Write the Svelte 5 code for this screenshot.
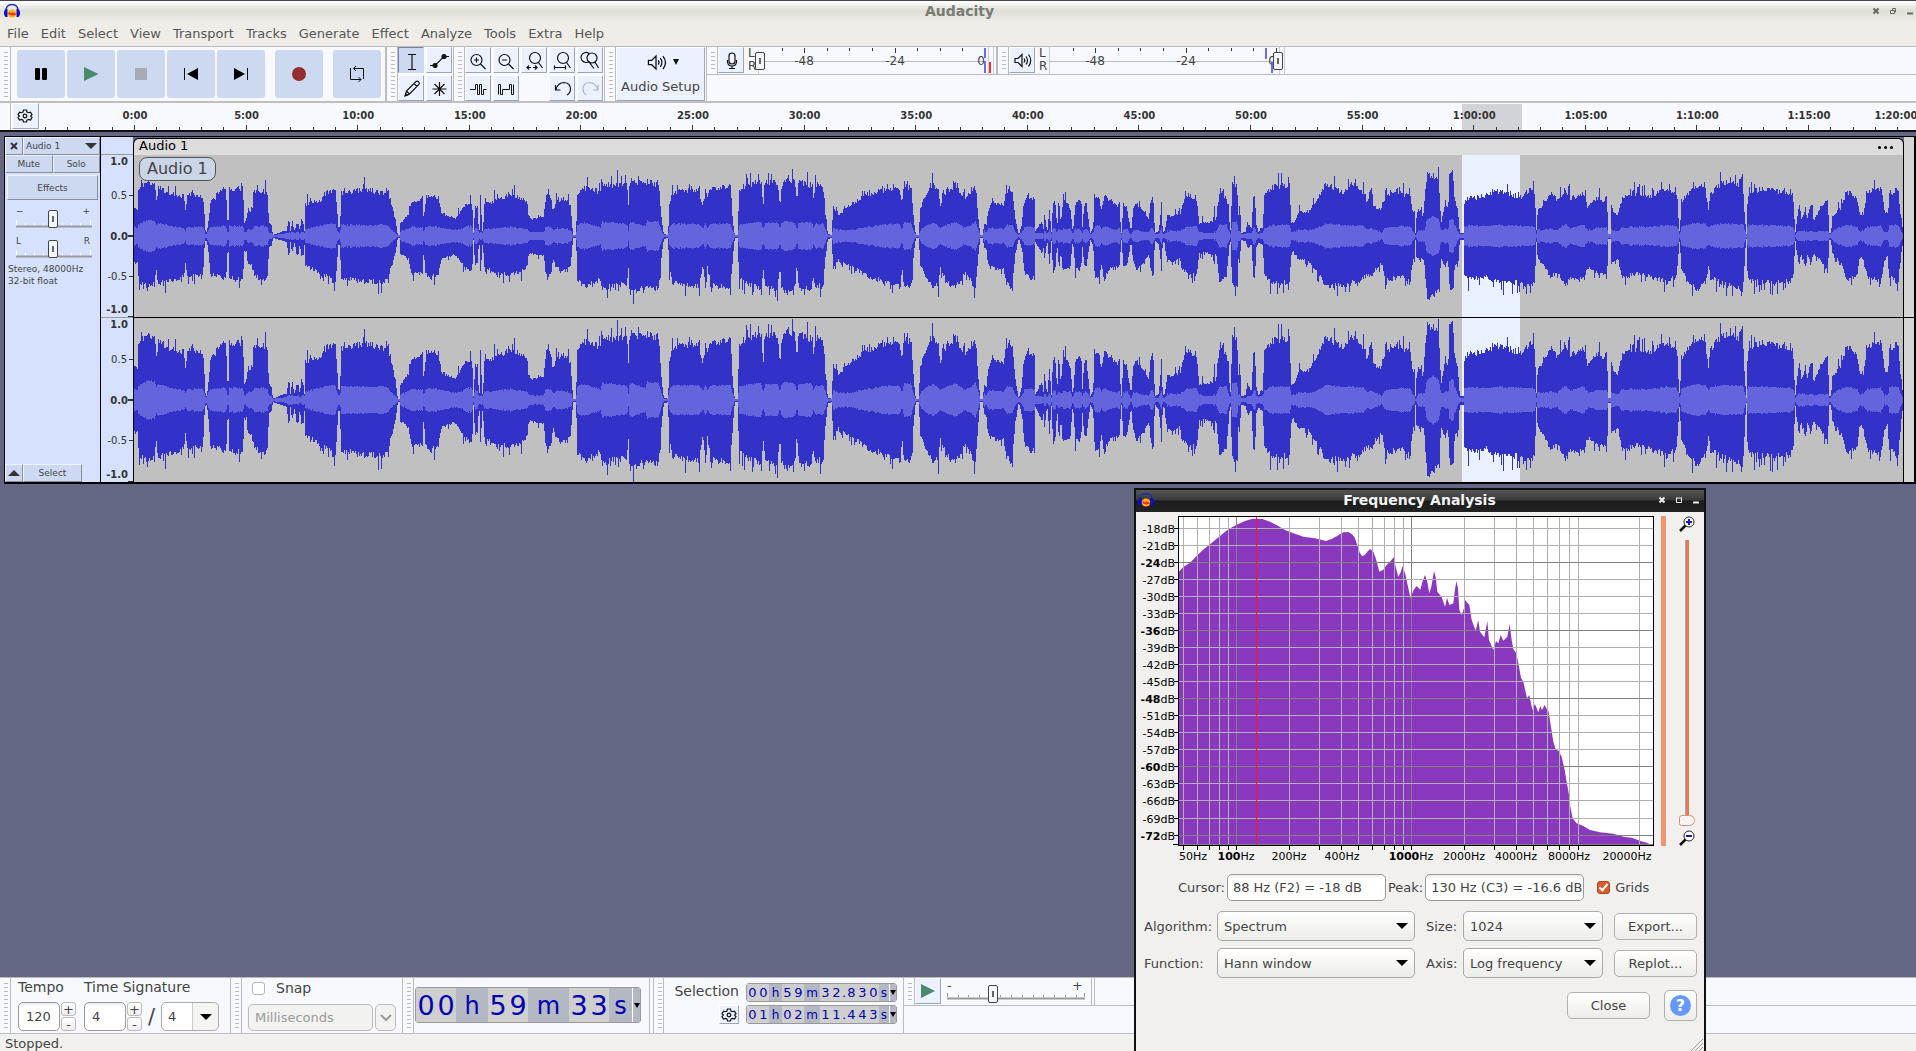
<script>
	const menus = ['File', 'Edit', 'Select', 'View', 'Transport', 'Tracks', 'Generate', 'Effect', 'Analyze', 'Tools', 'Extra', 'Help'];

	// stroked icons on a 26px grid
	const icons = {
		ibeam: 'M10 7.500h8M14 7.500v15M10 22.500h8',
		pencil: 'M7 21l1.500-5L18 6.500q1.500-1 2.700.300 1.200 1.300.200 2.600L11.500 19zM8.500 16l3 3M16 8.500l3 3M7 21l2.500-.800-1.700-1.700z',
		star: 'M13.500 7v14M6.500 14h14M8.500 9l10 10M18.500 9l-10 10',
		zoomIn: 'M17 13a5.500 5.500 0 1 1-11 0 5.500 5.500 0 0 1 11 0M15.500 17l5 5M9 13h5M11.500 10.500v5',
		zoomOut: 'M17 13a5.500 5.500 0 1 1-11 0 5.500 5.500 0 0 1 11 0M15.500 17l5 5M9 13h5',
		zoomSel: 'M19.500 11a5.500 5.500 0 1 1-11 0 5.500 5.500 0 0 1 11 0M17.500 15.500l4 5.500M6.500 20.500h3.500M12 20.500h3.500M8 18.500l-2 2 2 2M14 18.500l2 2-2 2',
		zoomFit: 'M19.500 11a5.500 5.500 0 1 1-11 0 5.500 5.500 0 0 1 11 0M17.500 15.500l4 5.500M5.500 18.500v4M16.500 18.500v4M5.500 20.500h11',
		zoomToggle: 'M9 15.500a5 5 0 1 1 3-9M20 11a5 5 0 1 1-10 0 5 5 0 0 1 10 0M18 15l3.500 6M9 15.500l3-.500 5 6.500',
		trim: 'M5 14.500h5.500v-5h2v10h2v-10h2v10h2v-5h3',
		silence: 'M5.500 19.500v-10h2v10h2v-5h7v-5h2v10h2v-10',
		undo: 'M7 14.500q2-7 8-7 6.500.500 6.500 6.500 0 4-3.500 6M6.500 10v5h5',
		redo: 'M20.500 14.500q-2-7-8-7-6.500.500-6.500 6.500 0 4 3.500 6M21 10v5h-5',
		mic: 'M11 9q0-3 3-3t3 3v5q0 3-3 3t-3-3zM9.500 13v2q.500 4 4.500 4t4.500-4v-2M14 19v2.500M11 21.500h6',
		speaker: 'M6 11.500h3l4-4v12l-4-4H6zM15 11.500q1.500 2 0 4M17 9.500q3 4 0 8M19.500 7.500q4.500 6 0 12',
		gear: 'M11.500 7h3l.500 2 1.500.700 2-.600 1.500 2.600-1.400 1.300 1.400 1.500-1.500 2.600-2-.600-1.500.700-.500 1.800h-3l-.500-1.800-1.500-.700-2 .600L6 14.500 7.400 13 6 11.700l1.500-2.600 2 .600 1.500-.700zM14.800 13a1.800 1.800 0 1 1-3.600 0 1.800 1.800 0 0 1 3.600 0'
	};

	const ticks = Array.from({ length: 85 }, (_, i) => i - 4);
	const hours = Array.from({ length: 17 }, (_, i) => {
		const m = i * 5;
		const rest = m % 60;
		return m < 60 ? `${m}:00` : `1:${String(rest).padStart(2, '0')}:00`;
	});
	const meterTicks = [24, 46, 69, 91, 114, 137, 159, 182, 204, 227];

	// envelope sections: first pixel, then rows of x (thirds of a pixel), peak, trough, rms
	const sections = [
		[-134, [[400,28,27,9],[412,28,27,9],[415,50,47,12],[445,54,50,16],[463,54,49,15],[467,34,31,11],[475,51,49,13],[500,44,45,11],[550,41,41,8],[555,26,27,6],[562,44,41,9],[608,41,38,9],[612,20,12,6],[616,1,1,1],[622,9,9,5],[630,34,37,9],[670,49,42,10],[677,46,42,10],[680,16,16,4],[684,16,16,4],[686,48,41,10],[727,49,44,10],[732,14,14,4],[738,14,14,4],[742,28,27,7],[755,25,30,6],[762,46,41,10],[800,46,44,10],[806,13,10,3],[814,11,9,3],[817,1,1,1],[850,5,4,2],[860,5,5,3],[862,16,19,3],[867,14,17,4],[870,5,5,3],[875,14,17,4],[883,5,5,3],[888,13,18,4],[894,13,18,4],[898,5,6,2],[903,17,20,4],[909,13,17,4],[912,5,8,3],[915,33,29,7],[960,36,37,10],[985,47,42,12],[1005,46,47,12],[1010,30,25,7],[1013,10,9,4],[1019,9,8,3],[1022,44,42,11],[1090,48,46,11],[1160,44,46,11]]],
		[256, [[0,38,33,7],[15,17,17,3],[22,1,1,1],[27,1,1,1],[30,13,17,5],[55,23,23,7],[62,33,37,9],[97,40,37,9],[100,13,10,2],[104,32,35,9],[115,42,42,10],[145,40,37,9],[153,23,23,8],[195,18,17,6],[215,28,28,7],[230,33,33,10],[245,35,35,10],[249,3,3,2],[254,30,28,8],[261,30,28,8],[265,6,8,3],[269,6,8,3],[270,40,36,4],[272,40,36,4],[274,5,8,3],[278,5,8,3],[281,33,32,7],[330,38,38,8],[360,43,38,9],[385,40,37,8],[410,35,30,7],[415,17,17,4],[460,20,20,4],[466,40,37,9],[482,40,38,9],[487,23,23,5],[498,37,32,8],[530,38,35,7],[541,30,28,6],[546,8,8,2],[548,1,1,1],[557,1,1,1],[560,42,43,11],[580,50,50,13],[630,45,43,9],[635,53,52,14],[710,52,47,12],[714,32,33,5],[718,57,57,14],[765,53,52,10],[770,57,53,15],[805,52,52,14],[815,13,16,4],[820,2,2,1],[833,1,1,1],[836,30,32,8],[845,45,47,12],[925,48,50,12],[937,30,30,8],[945,47,45,12],[952,37,28,8],[960,48,50,12],[1020,52,52,12],[1028,12,16,5],[1033,1,1,1],[1043,1,1,1],[1045,45,43,11],[1075,53,50,13],[1112,57,52,14],[1119,32,33,7],[1124,55,52,13],[1162,55,52,13],[1168,30,32,7],[1175,53,52,14],[1190,60,58,15],[1214,57,52,13],[1219,33,30,7],[1225,57,53,13],[1262,52,53,14],[1270,40,43,8],[1276,53,50,12],[1298,50,52,12],[1305,23,22,7],[1312,2,2,1],[1325,1,1,1],[1327,32,33,8],[1345,22,23,6],[1380,32,30,6],[1430,43,40,9],[1500,48,48,12],[1528,47,50,12]]],
		[766, [[0,45,40,9],[5,33,27,6],[10,52,53,14],[32,50,50,13],[40,17,17,4],[46,1,1,1],[56,1,1,1],[58,27,27,5],[78,45,43,11],[100,53,52,13],[115,47,47,10],[118,32,32,8],[140,47,47,11],[165,52,52,14],[195,38,38,8],[225,50,52,14],[235,13,13,5],[240,1,1,1],[248,1,1,1],[250,12,10,5],[259,12,14,5],[262,25,27,7],[275,35,32,8],[310,32,33,7],[318,47,47,11],[335,47,53,11],[345,17,17,4],[355,1,1,1],[365,13,13,4],[373,37,40,9],[403,40,43,9],[405,5,5,3],[425,15,17,3],[430,5,9,2],[431,23,23,5],[434,20,20,5],[440,3,3,2],[447,27,27,6],[453,4,4,2],[458,37,37,8],[466,32,30,7],[470,5,5,3],[475,40,33,8],[481,13,13,5],[488,40,35,7],[510,28,30,7],[517,3,3,2],[525,32,33,7],[542,37,33,7],[546,10,10,3],[550,27,25,6],[557,37,33,8],[563,17,17,5],[570,3,3,2],[578,8,8,3],[583,42,40,9],[597,37,40,11],[603,25,30,7],[612,43,45,10],[622,38,33,8],[650,30,32,6],[658,37,30,8],[661,3,3,2],[665,3,3,2],[667,33,30,6],[680,27,28,7],[690,8,8,2],[694,8,8,2],[697,27,23,6],[710,33,35,6],[735,23,23,4],[745,17,17,4],[752,40,37,8],[760,35,33,7],[763,3,3,2],[775,5,7,2],[783,30,32,7],[787,4,4,2],[793,5,6,2],[800,20,25,5],[840,23,23,5],[848,33,35,7],[860,43,37,9],[888,37,40,10],[897,13,17,4],[903,13,17,4],[904,36,35,5],[907,13,15,3],[938,15,18,3],[942,30,25,5],[946,13,12,3],[950,28,27,7],[958,43,47,11],[978,40,42,11],[985,27,15,5],[989,3,3,2],[992,13,10,3],[994,52,50,14],[1010,52,50,14],[1013,20,20,4],[1018,32,27,5],[1022,3,3,2],[1035,4,4,2],[1040,13,10,3],[1054,8,8,3],[1058,42,43,8],[1064,40,40,8],[1067,12,10,4],[1075,3,5,2],[1080,8,7,3],[1087,8,8,3],[1091,40,37,8],[1110,50,47,11],[1168,52,47,11],[1172,13,15,4],[1180,13,15,4],[1195,25,23,6],[1225,25,25,6],[1250,37,35,8],[1275,53,50,12],[1290,50,50,12],[1330,45,50,11],[1355,53,47,11],[1390,45,42,10],[1400,35,38,7],[1413,50,42,8],[1420,30,35,6],[1445,27,27,4],[1455,43,45,8],[1500,45,40,10],[1530,40,45,9],[1537,25,25,5],[1543,25,20,3],[1545,3,3,1],[1548,20,20,2],[1554,27,23,5]]],
		[1286, [[0,26,26,6],[8,19,17,5],[13,39,34,7],[20,63,61,17],[38,63,62,20],[55,58,54,17],[62,14,21,5],[75,36,31,7],[83,22,22,6],[87,63,51,15],[98,66,57,18],[103,36,26,10],[112,29,31,5],[118,3,3,2],[130,3,3,2],[132,34,37,10],[140,39,44,10],[200,41,41,10],[230,46,46,11],[300,39,47,10],[335,49,51,10],[344,43,47,9],[347,1,1,1],[352,26,21,6],[365,31,27,6],[392,46,41,7],[410,36,36,6],[435,49,51,12],[450,39,41,8],[490,43,44,11],[502,29,31,6],[530,39,37,8],[560,33,37,8],[564,2,2,2],[570,2,2,2],[572,29,27,7],[592,21,22,4],[605,39,41,9],[650,44,37,9],[690,41,41,9],[740,49,46,11],[768,41,41,10],[774,19,17,6],[778,1,1,1],[782,33,31,9],[800,43,44,11],[830,53,54,13],[855,49,47,12],[864,26,31,8],[870,43,41,11],[900,54,47,12],[930,56,51,12],[968,51,54,12],[973,18,18,5],[978,2,2,2],[982,43,44,11],[1020,49,47,11],[1110,44,46,10],[1120,33,38,9],[1124,1,1,1],[1128,13,12,3],[1136,33,31,6],[1142,13,16,5],[1155,30,30,5],[1160,18,18,4],[1172,33,25,5],[1180,15,18,4],[1200,29,24,5],[1222,39,36,5],[1226,3,3,2],[1232,3,3,2],[1235,19,17,5],[1260,29,26,9],[1280,46,44,11],[1310,39,41,9],[1318,22,21,5],[1328,21,21,5],[1340,46,41,9],[1380,48,46,10],[1392,26,24,4],[1403,22,20,4],[1406,43,41,11],[1433,48,47,11],[1440,22,22,6],[1449,2,2,1]]]
	];
	const envelope = sections.flatMap(([start, rows]) => rows.map(([x, ...rest]) => [start + x / 3, ...rest]));
	const CLIP_WIDTH = 1769;

	function noise(n) {
		const v = Math.sin(n * 127.1 + 11.7) * 43758.5453;
		return v - Math.floor(v);
	}

	// mostly low values with a tall one now and then
	function spike(n) {
		return 0.91 + noise(n) * 0.12 + (noise(n + 5000) > 0.82 ? noise(n + 8000) * 0.26 : 0);
	}

	function wave(mid, gain) {
		let peaks = '';
		let rms = '';
		let k = 0;
		for (let x = 0; x < CLIP_WIDTH; x++) {
			while (k < envelope.length - 2 && envelope[k + 1][0] < x) k++;
			const a = envelope[k];
			const b = envelope[k + 1];
			const t = Math.min(1, Math.max(0, (x - a[0]) / (b[0] - a[0] || 1)));
			const at = (i) => (a[i] + (b[i] - a[i]) * t) * gain;
			let up = at(1);
			let down = at(2);
			if (up > 9) {
				up *= spike(x);
				down *= spike(x + 900);
			}
			up = Math.round(Math.min(mid - 1, up));
			down = Math.round(Math.min(mid - 1, down));
			const r = Math.round(Math.min(up, at(3) + (at(3) > 4 ? noise(x + 300) * 1.6 - 0.8 : 0)));
			peaks += `M${x} ${mid - up}h1v${up + down + 1}h-1z`;
			rms += `M${x} ${mid - r}h1v${r * 2}h-1z`;
		}
		return { peaks, rms };
	}

	const channels = [
		{ height: 162, mid: 81, ...wave(81, 1) },
		{ height: 164, mid: 82, ...wave(82, 1.21) }
	];

	// spectrum plot
	const dbs = Array.from({ length: 19 }, (_, i) => -18 - i * 3);
	const dbY = (db) => Math.floor(16 + ((-18 - db) / 3) * 17.06) + 0.5;
	const hzX = (hz) => Math.round(275 + Math.log10(hz / 1000) * 175) + 0.5;
	const freqs = [50, 60, 70, 80, 90, 100, 200, 300, 400, 500, 600, 700, 800, 900, 1000, 2000, 3000, 4000, 5000, 6000, 7000, 8000, 9000, 20000];
	const freqLabels = [[50, 57], [100, 100], [200, 153], [400, 206], [1000, 275], [2000, 328], [4000, 380], [8000, 433], [20000, 491]];
	const spectrum =
		'145,262 160,246 180,233 205,208 222,192 240,178 270,153 295,133 320,119 345,108 368,101 397,102 420,110 445,123 465,135 490,145 520,155 555,160 588,168 605,162 625,151 640,142 655,141 665,147 673,155 680,175 690,205 697,214 705,209 712,200 720,192 730,200 738,222 748,260 760,254 770,240 780,230 791,217 797,245 805,275 812,262 818,243 826,268 835,310 842,340 850,316 860,303 871,314 878,288 885,270 892,290 898,325 904,305 912,258 917,275 922,320 935,336 945,365 951,338 958,360 970,355 974,320 979,288 984,310 988,375 995,390 1002,370 1005,345 1018,360 1025,405 1037,437 1045,405 1050,440 1063,457 1072,408 1077,465 1090,495 1098,468 1105,475 1112,450 1120,467 1132,455 1139,417 1145,465 1150,492 1159,505 1167,545 1173,578 1180,590 1191,640 1198,630 1207,675 1215,657 1225,682 1231,663 1236,675 1244,660 1250,672 1256,680 1262,720 1270,770 1277,793 1286,798 1295,815 1303,850 1310,890 1317,930 1321,965 1328,1000 1340,1015 1360,1023 1380,1035 1410,1042 1450,1046 1480,1055 1505,1058 1530,1067 1550,1073 1560,1078 1560,1081 145,1081';

	const bigTime = [...'00', 'h', ...'59', 'm', ...'33', 's'];
	const selTimes = [
		['Selection start', [...'00', 'h', ...'59', 'm', ...'32.830', 's']],
		['Selection end', [...'01', 'h', ...'02', 'm', ...'11.443', 's']]
	];

	let gain = 50;
	let pan = 50;
	let recVolume = 0;
	let playVolume = 100;
	let speed = 32;
	let zoom = 0;
	let snap = false;
	let grids = true;
</script>

{#snippet icon(name)}
	<svg class="icon" viewBox="0 0 26 26"><path d={icons[name]} /></svg>
{/snippet}

{#snippet logo()}
	<svg class="logo" viewBox="0 0 18 16">
		<path d="M3 9Q2.500 1.500 9 1.500T15 9" fill="none" stroke="#2030b0" stroke-width="1.500" />
		<ellipse cx="9" cy="10.500" rx="4.500" ry="4" fill="#ffb31a" />
		<path d="M5 11l1.500-2 1.500 1.500L9.500 9l1.500 1.500 1-1 1 2.500-4 .5z" fill="#f22c12" />
		<path d="M3.500 6Q1 6.500 1 10t2 4h1.500V6zM14.500 6Q17 6.500 17 10t-2 4h-1.500V6z" fill="#0a0ad2" />
	</svg>
{/snippet}

{#snippet time(chars)}
	{#each chars as c}<span class="cell" class:unit={/[hms]/.test(c)} class:m={c === 'm'} class:s={c === 's'} class:dot={c === '.'}>{c}</span>{/each}<span class="drop"></span>
{/snippet}

{#snippet meterScale()}
	<path d="M0 14.500h226" stroke="#bbb" />
	{#each meterTicks as x, i}
		<path d="M{x + 0.5} 1v{i % 4 === 1 ? 5 : 3}" stroke="#333" />
	{/each}
	<text x="46" y="18">-48</text>
	<text x="137" y="18">-24</text>
	<text x="223" y="18">0</text>
{/snippet}

<div class="window">
	<header class="titlebar">
		{@render logo()}
		<h1>Audacity</h1>
		<div class="winbuttons">
			<svg viewBox="0 0 8 8"><path d="M1.500 1.500l5 5M6.500 1.500l-5 5" stroke-width="2" /></svg>
			<svg viewBox="0 0 8 8"><path d="M1.500 3.500h4v3h-4zM3.500 3V1.500h3v3.500H6" /></svg>
			<svg viewBox="0 0 8 8"><path d="M1 6.500h6" stroke-width="2" /></svg>
		</div>
	</header>

	<nav class="menubar">
		{#each menus as menu}
			<a href="#{menu.toLowerCase()}">{menu}</a>
		{/each}
	</nav>

	<div class="dock">
		<div class="grip"></div>
		<div class="transport">
			<button aria-label="Pause"><svg viewBox="0 0 48 48"><rect x="18" y="18" width="5" height="12" rx="1" /><rect x="25" y="18" width="5" height="12" rx="1" /></svg></button>
			<button aria-label="Play"><svg viewBox="0 0 48 48"><path d="M17 17l14.500 7L17 31z" fill="#4a8a6c" /></svg></button>
			<button aria-label="Stop"><svg viewBox="0 0 48 48"><path d="M18 18h12v12H18z" fill="#a6aab3" /></svg></button>
			<button aria-label="Skip to start"><svg viewBox="0 0 48 48"><path d="M17 18h1v12h-1zM31 18v12l-11-6z" /></svg></button>
			<button aria-label="Skip to end"><svg viewBox="0 0 48 48"><path d="M30 18h1v12h-1zM17 18v12l11-6z" /></svg></button>
			<button class="apart" aria-label="Record"><svg viewBox="0 0 48 48"><circle cx="24" cy="24" r="7" fill="#962d2e" /></svg></button>
			<button class="apart" aria-label="Loop"><svg viewBox="0 0 48 48"><path d="M17.500 18v11.500h10.500M30.500 29V18.500H20.500M23 16l-2.500 2.500 2.500 2.500M25.500 27l2.500 2.500-2.500 2.500" fill="none" stroke="#111" /></svg></button>
		</div>
		<div class="grip"></div>
		<div class="tools two">
			<button class="tool on" aria-label="Selection tool">{@render icon('ibeam')}</button>
			<button class="tool" aria-label="Envelope tool"><svg class="icon" viewBox="0 0 26 26"><path d="M4 18.500h5l9-9h5" /><circle cx="9" cy="18.500" r="2" fill="#111" /><circle cx="18" cy="9.500" r="2" fill="#111" /></svg></button>
			<button class="tool" aria-label="Draw tool">{@render icon('pencil')}</button>
			<button class="tool" aria-label="Multi-tool">{@render icon('star')}</button>
		</div>
		<div class="grip"></div>
		<div class="tools five">
			<button class="tool" aria-label="Zoom in">{@render icon('zoomIn')}</button>
			<button class="tool" aria-label="Zoom out">{@render icon('zoomOut')}</button>
			<button class="tool" aria-label="Fit selection">{@render icon('zoomSel')}</button>
			<button class="tool" aria-label="Fit project">{@render icon('zoomFit')}</button>
			<button class="tool" aria-label="Zoom toggle">{@render icon('zoomToggle')}</button>
			<button class="tool thin" aria-label="Trim">{@render icon('trim')}</button>
			<button class="tool thin" aria-label="Silence">{@render icon('silence')}</button>
			<span></span>
			<button class="tool" aria-label="Undo">{@render icon('undo')}</button>
			<button class="tool faded" aria-label="Redo">{@render icon('redo')}</button>
		</div>
		<div class="grip"></div>
		<div class="setup">
			<button class="tool">
				<span class="setup-icons">
					<svg class="icon" viewBox="0 0 26 26"><path d={icons.speaker} /></svg>
					<i class="arrow"></i>
				</span>
				Audio Setup
			</button>
		</div>
		<div class="meters">
			<div class="grip"></div>
			<button class="tool" aria-label="Record meter">{@render icon('mic')}</button>
			<div class="lr"><span>L</span><span>R</span></div>
			<div class="meter">
				<svg width="238" height="27">
					<path d="M.5 3v24M230.500 0v27M235.500 0v27" stroke="#ccc" />
					{@render meterScale()}
					<path d="M226 1h2v10h-2zM226 14h2v12h-2z" fill="#6a6af5" />
					<path d="M231 15h2v11h-2z" fill="#ff2a2a" />
				</svg>
				<input type="range" aria-label="Recording volume" bind:value={recVolume} />
			</div>
			<div class="grip"></div>
			<button class="tool" aria-label="Playback meter">{@render icon('speaker')}</button>
			<div class="lr"><span>L</span><span>R</span></div>
			<div class="meter">
				<svg width="238" height="27">
					<path d="M.5 0v27M230.500 0v27M235.500 0v27" stroke="#ccc" />
					{@render meterScale()}
					<path d="M216 1h2v11h-2zM222 15h2v11h-2z" fill="#6a6af5" />
				</svg>
				<input type="range" aria-label="Playback volume" bind:value={playVolume} />
			</div>
		</div>
	</div>

	<div class="timeline">
		<div class="corner"></div>
		<button class="tool" aria-label="Timeline options">{@render icon('gear')}</button>
		<svg height="27">
			<rect x="1423" y="1" width="60" height="26" fill="#d2d3d9" />
			{#each ticks as t}
				{@const x = Math.round(95 + t * 22.32) + 0.5}
				<path d="M{x} {t % 5 === 0 ? 22 : 24}V27" stroke="#333" />
			{/each}
			{#each hours as label, i}
				<text x={Math.min(96 + i * 111.6, 1857)} y="16">{label}</text>
			{/each}
		</svg>
	</div>

	<main class="tracks">
		<section class="track">
			<div class="panel">
				<div class="row name">
					<button class="flat close" aria-label="Close track"><svg viewBox="0 0 8 8"><path d="M1 1l6 6M7 1l-6 6" stroke="#333" stroke-width="2" /></svg></button>
					<button class="flat title">Audio 1<i class="arrow wide"></i></button>
				</div>
				<div class="row halves">
					<button class="flat">Mute</button>
					<button class="flat">Solo</button>
				</div>
				<button class="flat effects">Effects</button>
				<div class="slider">
					<div class="ends"><span>−</span><span>+</span></div>
					<svg viewBox="0 0 76 10"><path d="M.5 2v6M9.500 5v3M18.500 5v3M27.500 5v3M46.500 5v3M55.500 5v3M64.500 5v3M74.500 2v6" stroke="#fff" /><path d="M0 8.500h76" stroke="#999" stroke-width="2" /></svg>
					<input type="range" aria-label="Gain" bind:value={gain} />
				</div>
				<div class="slider">
					<div class="ends"><span>L</span><span>R</span></div>
					<svg viewBox="0 0 76 10"><path d="M.5 2v6M9.500 5v3M18.500 5v3M27.500 5v3M46.500 5v3M55.500 5v3M64.500 5v3M74.500 2v6" stroke="#fff" /><path d="M0 8.500h76" stroke="#999" stroke-width="2" /></svg>
					<input type="range" aria-label="Pan" bind:value={pan} />
				</div>
				<p>Stereo, 48000Hz<br />32-bit float</p>
				<div class="row foot">
					<button class="flat close" aria-label="Collapse track"><i class="arrow wide up"></i></button>
					<button class="flat">Select</button>
				</div>
			</div>

			<div class="vruler">
				{#each channels as ch}
					<svg height={ch.height} width="32">
						<g class="strong">
							<text x="27" y="10">1.0</text>
							<text x="27" y={ch.mid + 4}>0.0</text>
							<text x="27" y={ch.height - 4}>-1.0</text>
						</g>
						<text x="26" y={ch.mid - 37}>0.5</text>
						<text x="26" y={ch.mid + 44}>-0.5</text>
						<path d="M28 {ch.mid - 40.5}h4M28 {ch.mid + 40.5}h4M27 {ch.height - 0.5}h5" stroke="#333" />
						<path d="M27 {ch.mid}h5" stroke="#333" stroke-width="2" />
					</svg>
				{/each}
			</div>

			<div class="clip">
				<div class="clip-title"><span>Audio 1</span><button aria-label="Clip menu"><i></i><i></i><i></i></button></div>
				{#each channels as ch}
					<svg class="wave" height={ch.height} viewBox="0 0 {CLIP_WIDTH} {ch.height}" preserveAspectRatio="none">
						<rect x="1328" width="58" height={ch.height} fill="#e9f1ff" />
						<path d={ch.peaks} fill="#3232c8" />
						<path d={ch.rms} fill="#6464dc" />
					</svg>
				{/each}
				<div class="badge">Audio 1</div>
			</div>
			<div class="after"></div>
		</section>
	</main>

	<footer class="dock bottom">
		<div class="grip"></div>
		<div class="signature">
			<label for="tempo">Tempo</label>
			<label for="upper">Time Signature</label>
			<div class="spin">
				<input id="tempo" value="120" />
				<div><button>+</button><button>-</button></div>
			</div>
			<div class="spin">
				<input id="upper" value="4" />
				<div><button>+</button><button>-</button></div>
				<b>/</b>
				<span class="select split"><select aria-label="Lower time signature"><option>4</option></select></span>
			</div>
		</div>
		<div class="grip"></div>
		<div class="snap">
			<label><input type="checkbox" bind:checked={snap} /> Snap</label>
			<div>
				<select disabled aria-label="Snap to"><option>Milliseconds</option></select>
				<button disabled aria-label="Snap options"><svg viewBox="0 0 12 8"><path d="M1 1l5 5 5-5" /></svg></button>
			</div>
		</div>
		<div class="grip"></div>
		<div class="bigtime">
			<div class="time large">{@render time(bigTime)}</div>
		</div>
		<div class="grip"></div>
		<div class="selection">
			<span>Selection</span>
			<div class="time" aria-label={selTimes[0][0]}>{@render time(selTimes[0][1])}</div>
			<button class="tool" aria-label="Selection options">{@render icon('gear')}</button>
			<div class="time" aria-label={selTimes[1][0]}>{@render time(selTimes[1][1])}</div>
		</div>
		<div class="meters speed">
			<div class="grip"></div>
			<button class="tool" aria-label="Play at speed"><svg class="icon" viewBox="0 0 26 26"><path class="go" d="M6 6l14 7-14 7z" /></svg></button>
			<div class="slider long">
				<div class="ends"><span>-</span><span>+</span></div>
				<svg viewBox="0 0 138 10"><path d="M.5 3v4M11.500 5v2M21.500 5v2M32.500 5v2M53.500 5v2M64.500 5v2M75.500 5v2M86.500 5v2M96.500 5v2M107.500 5v2M118.500 5v2M129.500 5v2M137.500 3v4" stroke="#999" /><path d="M0 8.500h138" stroke="#999" stroke-width="2" /></svg>
				<input type="range" aria-label="Playback speed" bind:value={speed} />
			</div>
			<div class="ending"></div>
		</div>
	</footer>
	<div class="status">Stopped.</div>

	<div class="dialog" role="dialog" aria-label="Frequency Analysis">
		<div class="dialog-title">
			{@render logo()}
			<h2>Frequency Analysis</h2>
			<div class="winbuttons">
				<svg viewBox="0 0 8 8"><path d="M1.500 1.500l5 5M6.500 1.500l-5 5" stroke-width="2" /></svg>
				<svg viewBox="0 0 8 8"><path d="M1.500 2v4.500h5V2M1 2h6" /></svg>
				<svg viewBox="0 0 8 8"><path d="M1 6.500h6" stroke-width="2" /></svg>
			</div>
		</div>
		<div class="plot">
			<svg class="chart" width="520" height="354">
				<rect x="42.500" y="4.500" width="475" height="329" fill="#fff" />
				<polygon points={spectrum} transform="translate(-6 -27) scale(.33333)" fill="#8a38bd" />
				{#if grids}
					{#each freqs as hz}
						<path d="M{hzX(hz)} 5V334" stroke={hz === 100 || hz === 1000 ? '#808080' : '#b0b0b0'} />
					{/each}
					{#each dbs as db}
						<path d="M43 {dbY(db)}H518" stroke={db % 12 === 0 ? '#808080' : '#b0b0b0'} />
					{/each}
				{/if}
				<path d="M43 332.500H518" stroke="#808080" />
				<path d="M120.500 5V333" stroke="#ff1a1a" />
				<rect x="42.500" y="4.500" width="475" height="329" fill="none" stroke="#000" />
				<path d="M37 332.500h5" stroke="#000" />
				{#each dbs as db}
					<path d="M38 {dbY(db)}h4" stroke="#000" />
					<text x="39" y={dbY(db) + 4} text-anchor="end"><tspan class:strong={db % 12 === 0}>{db}</tspan>dB</text>
				{/each}
				{#each freqs as hz}
					<path d="M{hzX(hz)} 334v4" stroke="#000" />
				{/each}
				{#each freqLabels as [hz, x]}
					<text {x} y="348" text-anchor="middle"><tspan class:strong={hz === 100 || hz === 1000}>{hz}</tspan>Hz</text>
				{/each}
			</svg>
			<div class="strip"></div>
			<div class="vzoom">
				<svg viewBox="0 0 16 16"><path d="M1 15l6-6" stroke="#111" stroke-width="2.500" /><circle cx="10" cy="6" r="5" fill="#fff" stroke="#222" /><path d="M10 3v6M7 6h6" stroke="#1616b4" stroke-width="2" /></svg>
				<input type="range" aria-label="Vertical zoom" bind:value={zoom} />
				<svg viewBox="0 0 16 16"><path d="M1 15l6-6" stroke="#111" stroke-width="2.500" /><circle cx="10" cy="6" r="5" fill="#fff" stroke="#222" /><path d="M7 6h6" stroke="#1616b4" stroke-width="2" /></svg>
			</div>
		</div>
		<div class="readout">
			<label for="cursor">Cursor:</label>
			<input id="cursor" readonly value="88 Hz (F2) = -18 dB" />
			<label for="peak">Peak:</label>
			<input id="peak" readonly value="130 Hz (C3) = -16.6 dB" />
			<label class="grids"><input type="checkbox" bind:checked={grids} /> Grids</label>
		</div>
		<div class="options">
			<label for="algorithm">Algorithm:</label>
			<span class="select"><select id="algorithm"><option>Spectrum</option></select></span>
			<label for="size">Size:</label>
			<span class="select"><select id="size"><option>1024</option></select></span>
			<button class="push">Export...</button>
			<label for="function">Function:</label>
			<span class="select"><select id="function"><option>Hann window</option></select></span>
			<label for="axis">Axis:</label>
			<span class="select"><select id="axis"><option>Log frequency</option></select></span>
			<button class="push">Replot...</button>
		</div>
		<div class="actions">
			<button class="push">Close</button>
			<button class="push help" aria-label="Help"><span>?</span></button>
		</div>
		<svg class="resize" viewBox="0 0 12 12"><path d="M0 12L12 0M4 12l8-8M8 12l4-4" stroke="#999" /></svg>
	</div>
</div>

<style>
	:global(body) {
		margin: 0;
		overflow: hidden;
	}
	.window {
		position: relative;
		display: flex;
		flex-direction: column;
		height: 100vh;
		overflow: hidden;
		background: #646784;
		color: #444;
		font: 13px 'DejaVu Sans', sans-serif;
	}
	* {
		box-sizing: border-box;
	}
	button,
	input,
	select {
		margin: 0;
		padding: 0;
		border: 0;
		color: inherit;
		font: inherit;
	}
	svg {
		display: block;
		flex: none;
	}

	/* title and menu */
	.titlebar {
		display: flex;
		align-items: center;
		height: 23px;
		padding: 0 2px 2px 3px;
		border-top: 1px solid #444;
		background: linear-gradient(#fff, #dedfd6 45%, #e6e6de 70%, #f0ede8);
	}
	.logo {
		width: 18px;
		height: 16px;
	}
	h1,
	h2 {
		flex: 1;
		margin: 0;
		text-align: center;
		font-size: 14px;
		line-height: 18px;
		color: #7b7b76;
	}
	.titlebar h1 {
		padding-left: 26px;
	}
	.winbuttons {
		display: flex;
		gap: 9px;
	}
	.winbuttons svg {
		width: 8px;
		height: 8px;
		fill: none;
		stroke: #666;
	}
	.menubar {
		display: flex;
		gap: 12px;
		height: 23px;
		padding-left: 7px;
		background: #f0ede8;
		line-height: 22px;
	}
	.menubar a {
		color: #555;
		text-decoration: none;
	}

	/* toolbars */
	.dock {
		display: flex;
		height: 57px;
		border-top: 1px solid #bbb;
		border-bottom: 2px solid #bfbfbf;
		background: #f8f9fe;
	}
	.grip {
		flex: none;
		width: 11px;
		border-right: 1px solid #bbb;
		background: repeating-linear-gradient(#bbb 0 1px, #f8f9fe 1px 4px) 4px 5px / 4px calc(100% - 8px) no-repeat;
	}
	.transport {
		display: flex;
		align-items: center;
		gap: 2px;
		padding: 0 4px 0 6px;
		border-right: 2px solid #bbb;
	}
	.transport button {
		width: 48px;
		height: 48px;
		border-radius: 3px;
		background: #cdd9f1;
	}
	.transport .apart {
		margin-left: 8px;
	}
	.tools {
		display: grid;
		gap: 2px;
		padding-right: 1px;
		border-right: 1px solid #bbb;
	}
	.two {
		grid-template-columns: repeat(2, 26px);
	}
	.five {
		grid-template-columns: repeat(5, 26px);
	}
	.tool {
		display: block;
		flex: none;
		width: 26px;
		height: 26px;
		border: 1px solid #fff;
		border-right-color: #9da5b8;
		border-bottom-color: #9da5b8;
		background: #ebf1ff;
	}
	.tool.on {
		background: #cdd9f1;
		border-color: #7d859b #cdd9f1 #cdd9f1 #7d859b;
	}
	.icon {
		width: 26px;
		height: 26px;
		margin: -1px;
		fill: none;
		stroke: #111;
		stroke-width: 1.2;
	}
	.thin .icon {
		stroke-width: 1;
	}
	.faded .icon {
		stroke: #b0b5c0;
	}
	.go {
		fill: #4a8a6c;
		stroke: none;
	}
	.setup {
		padding-right: 1px;
		border-right: 1px solid #bbb;
	}
	.setup .tool {
		width: 89px;
		height: 54px;
		padding-bottom: 5px;
	}
	.setup-icons {
		display: flex;
		align-items: center;
		justify-content: center;
		gap: 4px;
		padding-bottom: 4px;
	}
	.setup .icon {
		width: 28px;
		height: 28px;
	}
	.arrow {
		border: 3px solid transparent;
		border-top: 6px solid #111;
		border-bottom: 0;
	}
	.arrow.wide {
		border-width: 6px 6px 0;
		border-top-color: #333;
	}
	.arrow.wide.up {
		border-width: 0 6px 6px;
		border-bottom: 6px solid #333;
	}
	.meters {
		display: flex;
		flex: 1;
		height: 28px;
		border-bottom: 1px solid #bbb;
	}
	.lr {
		display: flex;
		flex-direction: column;
		width: 14px;
		padding-left: 4px;
		font-size: 12px;
		line-height: 13px;
	}
	.meter {
		position: relative;
	}
	.meter + .grip {
		border-left: 2px solid #bbb;
		width: 13px;
	}
	.meter text {
		font-size: 12px;
		text-anchor: middle;
		fill: #444;
	}
	input[type='range'] {
		appearance: none;
		background: none;
	}
	.meter input {
		position: absolute;
		left: -3px;
		top: 4px;
		width: 237px;
		height: 19px;
	}
	input[type='range']::-webkit-slider-thumb {
		appearance: none;
		width: 10px;
		height: 18px;
		border: 1px solid #444;
		border-radius: 2px;
		background: linear-gradient(#666, #666) center / 2px 6px no-repeat #f4f5fa;
	}

	/* timeline */
	.timeline {
		display: flex;
		height: 29px;
		border-bottom: 2px solid #111;
		background: #f8f9fe;
	}
	.timeline > svg {
		flex: 1;
		min-width: 0;
		overflow: hidden;
	}
	.timeline text {
		font-size: 10px;
		font-weight: bold;
		text-anchor: middle;
		fill: #333;
	}
	.corner {
		width: 11px;
		margin-right: 1px;
		border-right: 1px solid #bbb;
	}
	.timeline .tool {
		width: 27px;
	}

	/* track */
	.tracks {
		flex: 1;
		padding: 4px 0 0 4px;
	}
	.track {
		display: flex;
		height: 348px;
		border: solid #000;
		border-width: 1px 2px 2px 1px;
	}
	.panel {
		display: flex;
		flex-direction: column;
		width: 96px;
		border-right: 1px solid #000;
		background: #d5e1fe;
		font-size: 9px;
	}
	.row {
		display: flex;
		height: 18px;
	}
	.flat {
		display: flex;
		flex: 1;
		align-items: center;
		justify-content: center;
		border: 1px solid #eef3ff;
		border-right-color: #888e9c;
		border-bottom-color: #888e9c;
		background: #cdd9f1;
	}
	.flat.close {
		flex: none;
		width: 18px;
	}
	.flat.close svg {
		width: 8px;
	}
	.flat.title {
		justify-content: space-between;
		padding: 0 2px;
	}
	.effects {
		flex: none;
		height: 25px;
		margin: 2px 2px 8px;
	}
	.foot {
		width: 77px;
		margin-top: auto;
	}
	.slider {
		position: relative;
		height: 30px;
		margin: 0 8px 0 11px;
	}
	.slider svg {
		width: 76px;
		margin-top: 3px;
	}
	.ends {
		display: flex;
		justify-content: space-between;
		padding-right: 2px;
		line-height: 7px;
	}
	.slider input {
		position: absolute;
		left: 0;
		top: 2px;
		width: 73px;
		height: 18px;
	}
	.panel p {
		margin: -5px 0 0 3px;
		line-height: 12px;
	}
	.vruler {
		display: flex;
		flex-direction: column;
		gap: 1px;
		padding-top: 18px;
		width: 32px;
		background: #999;
		box-shadow: inset 0 17px #d5e1fe;
	}
	.vruler svg {
		background: #d5e1fe;
		font-size: 10px;
		text-anchor: end;
		fill: #333;
	}
	.strong {
		font-weight: bold;
	}
	.clip {
		position: relative;
		display: flex;
		flex: 1;
		flex-direction: column;
		gap: 1px;
		margin-top: 1px;
		border: solid #000;
		border-width: 1px 1px 0;
		border-radius: 6px 6px 0 0;
		background: #000;
		overflow: hidden;
	}
	.clip-title {
		display: flex;
		justify-content: space-between;
		height: 16px;
		margin-bottom: -1px;
		padding: 0 10px 0 5px;
		background: #dcdcdc;
		color: #000;
		line-height: 14px;
	}
	.clip-title button {
		display: flex;
		align-items: center;
		gap: 3px;
		background: none;
	}
	.clip-title i {
		width: 3px;
		height: 3px;
		border-radius: 50%;
		background: #000;
	}
	.wave {
		width: 100%;
		background: #c0c0c0;
		shape-rendering: crispEdges;
	}
	.badge {
		position: absolute;
		left: 5px;
		top: 18px;
		padding: 0 7px;
		border: 1px solid #555;
		border-radius: 8px;
		background: rgba(205, 217, 241, 0.8);
		font-size: 16px;
		line-height: 22px;
	}
	.after {
		width: 10px;
		background: linear-gradient(#000, #000) 0 180px / 100% 1px no-repeat #d5d5d5;
	}

	/* bottom toolbars */
	.bottom {
		border-bottom-width: 1px;
	}
	.signature {
		display: grid;
		grid-template: 24px 30px / 66px auto;
		width: 220px;
		padding-left: 7px;
		border-right: 1px solid #bbb;
	}
	.signature label,
	.snap label,
	.selection span {
		font-size: 14px;
	}
	.signature label {
		line-height: 18px;
	}
	.spin {
		display: flex;
		gap: 1px;
	}
	.spin input,
	.readout input:not([type='checkbox']) {
		border: 1px solid #999;
		border-radius: 5px;
		background: linear-gradient(#eee, #fff 4px);
	}
	.spin input {
		width: 42px;
		height: 29px;
		padding-left: 7px;
	}
	.spin button {
		display: block;
		width: 15px;
		height: 14px;
		margin-bottom: 1px;
		border: 1px solid #bbb;
		border-radius: 3px;
		background: linear-gradient(#fff, #eee);
		line-height: 11px;
	}
	.spin b {
		padding: 0 5px;
		font-size: 21px;
		font-weight: normal;
		line-height: 30px;
	}
	.select {
		position: relative;
		display: block;
	}
	.select::after {
		content: '';
		position: absolute;
		right: 7px;
		top: calc(50% - 3px);
		border: 6px solid transparent;
		border-top-color: #000;
		border-bottom: 0;
		pointer-events: none;
	}
	select {
		width: 100%;
		height: 30px;
		padding-left: 6px;
		border: 1px solid #aaa;
		border-radius: 5px;
		background: linear-gradient(#fff, #ececea);
		appearance: none;
	}
	.split select {
		width: 58px;
		height: 29px;
		background: linear-gradient(90deg, #fff 30px, #ccc 30px 31px, #f4f4f2 31px);
	}
	.snap {
		width: 161px;
		padding-left: 6px;
		border-right: 1px solid #bbb;
	}
	.snap label {
		display: flex;
		align-items: center;
		gap: 11px;
		height: 20px;
		margin-left: 4px;
	}
	input[type='checkbox'] {
		width: 13px;
		height: 13px;
		border: 1px solid #b5b5b5;
		border-radius: 3px;
		background: #fff;
		appearance: none;
	}
	input[type='checkbox']:checked {
		border-color: #a8441e;
		background: #d8602f;
	}
	.snap div {
		display: flex;
		gap: 2px;
		margin-top: 6px;
	}
	.snap select,
	.snap button {
		width: 125px;
		height: 27px;
		border: 1px solid #bbb;
		border-radius: 5px;
		background: #f2f2f0;
		color: #999;
		opacity: 1;
	}
	.snap button {
		display: grid;
		place-items: center;
		width: 21px;
	}
	.snap button svg {
		width: 12px;
		fill: none;
		stroke: #999;
		stroke-width: 2;
	}
	.bigtime {
		width: 236px;
		padding: 9px 0 0 1px;
		border-right: 1px solid #bbb;
	}
	.bigtime + .grip {
		margin-left: 3px;
		border-left: 1px solid #bbb;
	}
	.time {
		display: flex;
		width: 151px;
		height: 19px;
		border: 1px solid #999;
		border-radius: 3px;
		overflow: hidden;
		color: #0000b0;
		line-height: 18px;
	}
	.time .cell {
		width: 11px;
		background: #cfcfcf;
		text-align: center;
		font-size: 13px;
	}
	.time .unit {
		width: 13px;
		background: #b3b8c2;
		font-size: 12px;
	}
	.time .m {
		width: 16px;
	}
	.time .s {
		width: 10px;
	}
	.time .dot {
		width: 4px;
	}
	.drop {
		display: grid;
		flex: 1;
		place-items: center;
		border-left: 1px solid #fff;
		background: #b3b8c2;
	}
	.drop::after {
		content: '';
		border: 3px solid transparent;
		border-top: 5px solid #000;
		border-bottom: 0;
	}
	.large {
		width: 226px;
		height: 36px;
		line-height: 36px;
	}
	.large .cell {
		width: 20px;
		font-size: 27px;
	}
	.large .unit {
		width: 32px;
		font-size: 24px;
	}
	.large .m {
		width: 41px;
	}
	.large .s {
		width: 23px;
	}
	.selection {
		display: grid;
		grid-template: 19px 19px / 68px 151px;
		gap: 3px 7px;
		justify-items: end;
		width: 240px;
		padding: 5px 0 0 7px;
		border-right: 1px solid #bbb;
	}
	.selection > span {
		line-height: 16px;
	}
	.selection .tool {
		width: 20px;
		height: 19px;
		overflow: hidden;
	}
	.selection .tool .icon {
		margin: -4px;
	}
	.speed .slider {
		width: 138px;
		margin: 2px 6px 0;
	}
	.speed .ends {
		line-height: 11px;
	}
	.long svg {
		width: 138px;
		margin-top: -1px;
	}
	.long input {
		top: 5px;
		width: 138px;
	}
	.ending {
		width: 4px;
		border: solid #bbb;
		border-width: 0 1px;
	}
	.status {
		height: 17px;
		padding-left: 5px;
		background: #f1f0ef;
		line-height: 19px;
	}

	/* frequency analysis window */
	.dialog {
		position: absolute;
		right: 210px;
		bottom: 0;
		width: 572px;
		height: 563px;
		border: 2px solid #111;
		border-bottom: 0;
		background: #f1f0ef;
	}
	.dialog-title {
		display: flex;
		align-items: center;
		height: 22px;
		padding: 0 4px 3px 1px;
		background: linear-gradient(#555, #3a3a3a 45%, #1c1c1c 50%, #222);
	}
	.dialog-title h2 {
		padding-left: 26px;
		color: #f4f4f4;
	}
	.dialog .winbuttons svg {
		stroke: #eee;
	}
	.plot {
		display: flex;
	}
	.chart {
		font-size: 11px;
	}
	.strip {
		width: 5px;
		height: 330px;
		margin: 4px 13px 0 5px;
		background: #f3946b;
	}
	.vzoom {
		display: flex;
		flex-direction: column;
		align-items: center;
		margin-top: 4px;
	}
	.vzoom svg {
		width: 16px;
		height: 16px;
	}
	.vzoom input {
		width: 16px;
		height: 286px;
		margin: 8px 0 4px;
		direction: rtl;
		writing-mode: vertical-lr;
		background: linear-gradient(90deg, #aaa 1px, #e07b54 1px) center / 4px 100% no-repeat;
	}
	.vzoom input::-webkit-slider-thumb {
		width: 16px;
		height: 11px;
		border: 1px solid #dd9272;
		border-radius: 4px 8px 8px 4px;
		background: #f6f4f2;
	}
	.readout {
		display: flex;
		align-items: center;
		gap: 2px;
		height: 27px;
		margin: 8px 0 0 42px;
	}
	.readout input:not([type='checkbox']) {
		width: 159px;
		height: 27px;
		padding: 0 1px 0 5px;
	}
	.readout .grids {
		display: flex;
		align-items: center;
		gap: 5px;
		margin-left: 11px;
	}
	.grids input {
		display: grid;
		place-items: center;
	}
	.grids input:checked::before {
		content: '';
		width: 3px;
		height: 7px;
		margin-top: -2px;
		border: solid #fff;
		border-width: 0 2px 2px 0;
		transform: rotate(40deg);
	}
	.options {
		display: grid;
		grid-template-columns: 73px 198px 48px 140px 94px;
		align-items: center;
		row-gap: 7px;
		padding: 10px 0 0 8px;
	}
	.options label[for='size'],
	.options label[for='axis'] {
		padding-left: 11px;
	}
	.push {
		width: 83px;
		height: 27px;
		border: 1px solid #b0b0b0;
		border-radius: 5px;
		background: linear-gradient(#fff, #ececea);
	}
	.options .push {
		justify-self: end;
	}
	.actions {
		display: flex;
		align-items: center;
		justify-content: flex-end;
		gap: 14px;
		padding: 12px 7px 0 0;
	}
	.push.help {
		display: grid;
		place-items: center;
		width: 33px;
		height: 31px;
	}
	.help span {
		width: 21px;
		height: 21px;
		border-radius: 50%;
		background: #6699ff;
		color: #fff;
		font-size: 16px;
		font-weight: bold;
		line-height: 21px;
	}
	.resize {
		position: absolute;
		right: 1px;
		bottom: 0;
		width: 12px;
		height: 12px;
	}
</style>
